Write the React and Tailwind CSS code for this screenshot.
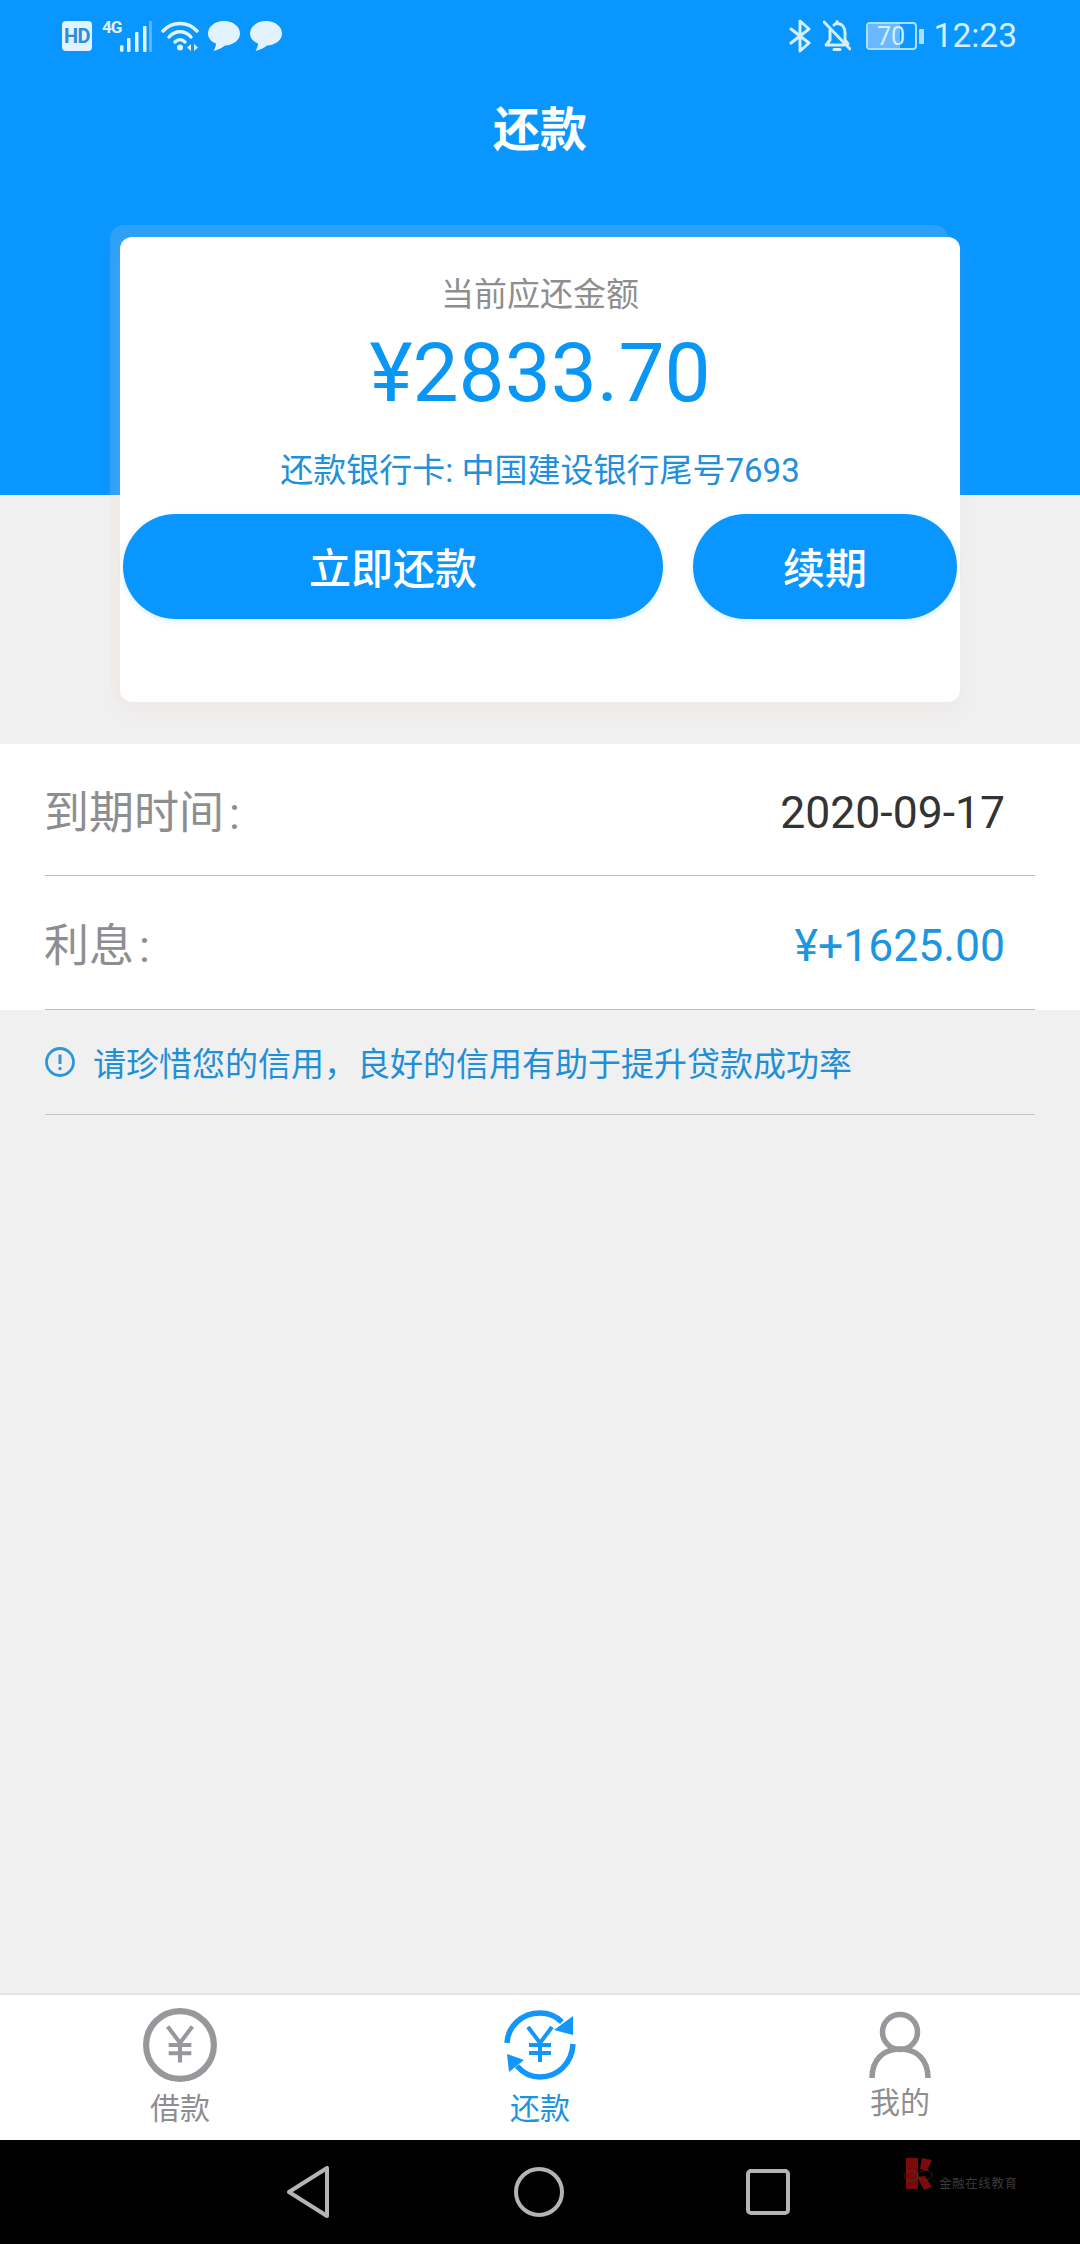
import React from "react";

const FONT = { fontFamily: '"Roboto","Noto Sans CJK SC",sans-serif' };

function Yen({ color, cx = 36, cy = 35 }) {
  return (
    <g stroke={color} fill="none" strokeWidth="4">
      <path d={`M${cx - 12} ${cy - 17}L${cx} ${cy - 1}L${cx + 12} ${cy - 17}`} />
      <path d={`M${cx} ${cy - 1}V${cy + 18}M${cx - 11} ${cy + 1}H${cx + 11}M${cx - 11} ${cy + 9}H${cx + 11}`} />
    </g>
  );
}

function StatusLeft() {
  const c = "#e2f3ff";
  return (
    <div className="flex items-center">
      <div className="w-[30px] h-[30px] rounded-[4px] bg-[#e2f3ff] flex items-center justify-center text-[20px] leading-none font-bold tracking-[-0.5px] text-[#2a8ed6]">HD</div>
      <div className="relative ml-[10px] w-[50px] h-[32px]">
        <span className="absolute left-0 -top-[3px] text-[17px] font-bold leading-[20px] text-[#e2f3ff] tracking-[-1px]">4G</span>
        <svg className="absolute inset-0" width="50" height="32" viewBox="0 0 50 32">
          <rect x="18" y="25" width="3.500" height="7" rx="1.700" fill={c} />
          <rect x="25" y="18" width="3.500" height="14" rx="1" fill={c} />
          <rect x="33" y="12" width="3.500" height="20" rx="1" fill={c} />
          <rect x="41" y="6" width="3.500" height="26" rx="1" fill={c} />
          <rect x="47" y="1" width="3.500" height="31" rx="1" fill="#5db4fb" />
        </svg>
      </div>
      <svg className="ml-[9px]" width="38" height="32" viewBox="0 0 38 32" fill="none" stroke={c} strokeWidth="3.400" strokeLinecap="round">
        <path d="M2 11C11 1 27 1 36 11" />
        <path d="M8 17C14 10 24 10 30 17" />
        <path d="M14 22C17 19 21 19 24 22" />
        <circle cx="19" cy="27.500" r="3" fill={c} stroke="none" />
        <path d="M30 24L26 27.500L30 31ZM33 24L37 27.500L33 31Z" fill={c} stroke="none" />
      </svg>
      <svg className="ml-[8px]" width="34" height="30" viewBox="0 0 34 30" fill={c}>
        <path d="M17 0C26 0 33 5.500 33 12.500C33 19.500 26 24 18 24.500C15 27 11 29 6.500 30C8 27.500 9 25 9 22.500C4 20.500 1 17 1 12.500C1 5.500 8 0 17 0Z" />
      </svg>
      <svg className="ml-[8px]" width="34" height="30" viewBox="0 0 34 30" fill={c}>
        <path d="M17 0C26 0 33 5.500 33 12.500C33 19.500 26 24 18 24.500C15 27 11 29 6.500 30C8 27.500 9 25 9 22.500C4 20.500 1 17 1 12.500C1 5.500 8 0 17 0Z" />
      </svg>
    </div>
  );
}

function StatusRight() {
  const c = "#d6efff";
  return (
    <div className="flex items-center text-[#d6efff]">
      <svg width="22" height="34" viewBox="0 0 22 34" fill="none" stroke={c} strokeWidth="3" strokeLinejoin="round" strokeLinecap="round">
        <path d="M2 10L20 24L11 32V2L20 10L2 24" />
      </svg>
      <svg className="ml-[12px]" width="28" height="32" viewBox="0 0 28 32" fill="none" stroke={c} strokeWidth="3" strokeLinecap="round" strokeLinejoin="round">
        <path d="M1 2L27 29" />
        <path d="M7 10C7 11 7 13 7 15V20L3 25H21" />
        <path d="M11 5C12 4 13 3.500 14 3.500V1.500M14 3.500C19 3.500 22 7.500 22 13V20L25 24" />
        <path d="M11 29.500H17" />
      </svg>
      <div className="ml-[15px] relative w-[51px] h-[28px] rounded-[4px] border-2 border-[#a8e0ff] overflow-hidden">
        <div className="h-full w-[70%] bg-[#6ab8ff]" />
        <span className="absolute inset-0 flex items-center justify-center text-[25px] leading-none text-[#d6efff]">70</span>
      </div>
      <div className="ml-[2px] w-[5px] h-[15px] rounded-[1px] bg-[#a8e0ff]" />
      <span className="ml-[10px] text-[33.500px] leading-none">12:23</span>
    </div>
  );
}

function Row({ label, value, valueClass, h }) {
  return (
    <div className={"mx-[45px] pt-[8px] pr-[30px] flex items-center justify-between border-b border-[#bdbdbd] " + h}>
      <span className="-ml-[1px] text-[45px] leading-none text-[#8e8e90]">
        {label}
        <span className="ml-[5px]">:</span>
      </span>
      <span className={"text-[44.500px] leading-none " + valueClass}>{value}</span>
    </div>
  );
}

function Tab({ icon, label, color, labelClass }) {
  return (
    <div className="flex flex-col items-center pt-[13px]">
      <div className="h-[74px] flex items-center justify-center">{icon}</div>
      <span className={"text-[30px] leading-none " + labelClass} style={{ color }}>{label}</span>
    </div>
  );
}

export default function App() {
  return (
    <div className="w-[1080px] h-[2244px] flex flex-col bg-[#f0f0f0] overflow-hidden" style={FONT}>
      <header className="h-[495px] shrink-0 bg-[#0a96ff]">
        <div className="h-[72px] pl-[62px] pr-[63px] flex items-center justify-between">
          <StatusLeft />
          <StatusRight />
        </div>
        <h1 className="mt-[28px] h-[60px] text-center text-[47px] leading-[60px] font-bold text-white">还款</h1>
        <div className="relative mt-[77px] mx-[120px] h-[465px]">
          <div className="absolute -left-[10px] -top-[12px] right-[12px] bottom-0 rounded-[14px] bg-[rgba(250,225,210,0.15)]" />
          <div className="relative h-full rounded-[12px] bg-white px-[3px] flex flex-col items-center shadow-[0_8px_18px_rgba(225,190,170,0.12)]">
            <div className="mt-[38px] text-[33px] leading-[40px] text-[#8e8e8e]">当前应还金额</div>
            <div className="mt-[13px] text-[82px] leading-[90px] text-[#0a96f5]">¥2833.70</div>
            <div className="mt-[33px] text-[33px] leading-[40px] text-[#2090dc]">还款银行卡: 中国建设银行尾号7693</div>
            <div className="mt-[23px] w-full flex gap-[30px]">
              <button className="w-[540px] h-[105px] pt-[5px] rounded-full bg-[#0a96ff] text-white text-[42px] font-medium shadow-[0_2px_6px_rgba(10,150,255,0.15)]">立即还款</button>
              <button className="w-[264px] h-[105px] pt-[5px] rounded-full bg-[#0a96ff] text-white text-[42px] font-medium shadow-[0_2px_6px_rgba(10,150,255,0.15)]">续期</button>
            </div>
          </div>
        </div>
      </header>

      <main className="flex-1 pt-[249px]">
        <section className="bg-white h-[266px]">
          <Row h="h-[132px]" label="到期时间" value="2020-09-17" valueClass="text-[#333333]" />
          <Row h="h-[134px]" label="利息" value="¥+1625.00" valueClass="text-[#1b96e0]" />
        </section>
        <div className="mx-[45px] h-[105px] flex items-center border-b border-[#c4c4c4] text-[#1f8fd8]">
          <svg width="30" height="30" viewBox="0 0 30 30" fill="none" stroke="#2e97dc" strokeWidth="2.800">
            <circle cx="15" cy="15" r="13.500" />
            <path d="M15 7.500V17" strokeWidth="3" />
            <circle cx="15" cy="21.500" r="1.700" fill="#2e97dc" stroke="none" />
          </svg>
          <span className="ml-[18px] pt-[5px] text-[33px] leading-none">请珍惜您的信用，良好的信用有助于提升贷款成功率</span>
        </div>
      </main>

      <nav className="h-[147px] shrink-0 bg-white border-t-2 border-[#e4e4e4] grid grid-cols-3">
        <Tab
          label="借款"
          color="#8e8e90"
          labelClass="mt-[12px]"
          icon={
            <svg width="74" height="74" viewBox="0 0 72 72">
              <circle cx="36" cy="36" r="33" fill="none" stroke="#98989c" strokeWidth="6" />
              <Yen color="#98989c" />
            </svg>
          }
        />
        <Tab
          label="还款"
          color="#1c93e2"
          labelClass="mt-[12px]"
          icon={
            <svg width="72" height="72" viewBox="0 0 72 72" fill="none">
              <path d="M3 34C4 17 18 4 36 4C45 4 52 7 58 13" stroke="#1296f8" strokeWidth="5.500" />
              <path d="M69 7L69 26L50 21Z" fill="#1296f8" />
              <path d="M69 35C68 54 54 68 36 68C27 68 19 64 13 57" stroke="#1296f8" strokeWidth="5.500" />
              <path d="M3 45L20 51L5 63Z" fill="#1296f8" />
              <Yen color="#1296f8" />
            </svg>
          }
        />
        <Tab
          label="我的"
          color="#8e8e90"
          labelClass="mt-[6px]"
          icon={
            <svg width="64" height="68" viewBox="0 0 64 68" fill="none" stroke="#98989c" strokeWidth="5.500">
              <circle cx="32" cy="21" r="17.500" />
              <path d="M4 67C4 49 15 38 32 38C49 38 60 49 60 67" />
            </svg>
          }
        />
      </nav>

      <footer className="relative h-[104px] shrink-0 bg-black flex items-center justify-center pr-[3px]">
        <svg width="42" height="52" viewBox="0 0 42 52" fill="none" stroke="#b4b4b4" strokeWidth="4" strokeLinejoin="round">
          <path d="M40 2V50L2 26Z" />
        </svg>
        <svg className="ml-[185px]" width="50" height="50" viewBox="0 0 50 50" fill="none" stroke="#b4b4b4" strokeWidth="4">
          <circle cx="25" cy="25" r="23" />
        </svg>
        <svg className="ml-[182px]" width="44" height="46" viewBox="0 0 44 46" fill="none" stroke="#b4b4b4" strokeWidth="4">
          <rect x="2" y="2" width="40" height="42" rx="3" />
        </svg>
        <div className="absolute left-[903px] top-[17px] flex items-end">
          <svg width="32" height="34" viewBox="0 0 32 34">
            <path d="M3 1H15V32H3Z M19 1L29 3L24 14L17 12Z M14 20L22 19L29 30L21 33Z" fill="#7c0a0a" />
            <g fill="none" stroke="#3a3a3a" strokeWidth="0.700">
              <ellipse cx="8" cy="19" rx="7" ry="5" />
              <ellipse cx="22" cy="18" rx="7" ry="5" />
            </g>
          </svg>
          <span className="ml-[4px] text-[12.500px] leading-[14px] tracking-[0.6px] text-[#3a3a3a]">金融在线教育</span>
        </div>
      </footer>
    </div>
  );
}
